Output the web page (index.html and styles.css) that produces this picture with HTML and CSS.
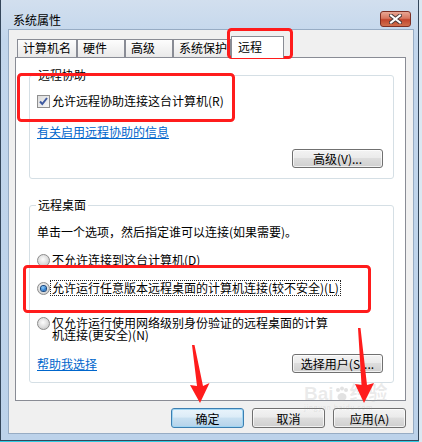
FILE: index.html
```html
<!DOCTYPE html>
<html lang="zh-CN">
<head>
    <meta charset="UTF-8">
    <meta name="viewport" content="width=device-width, initial-scale=1.0">
    <title>系统属性</title>
    <link rel="stylesheet" href="styles.css">
</head>
<body>
    <div class="window">
        <div class="titlebar">
            <span class="title">系统属性</span>
            <button class="close-btn" aria-label="关闭">
                <svg width="13" height="10" viewBox="0 0 13 10">
                    <path d="M2 1.5 L11 8.5 M11 1.5 L2 8.5" stroke="#4a3a3a" stroke-width="4" stroke-linecap="square"/>
                    <path d="M2 1.5 L11 8.5 M11 1.5 L2 8.5" stroke="#fff" stroke-width="2" stroke-linecap="square"/>
                </svg>
            </button>
        </div>

        <div class="client">
            <div class="tabs">
                <div class="tab tab-name">计算机名</div>
                <div class="tab tab-hw">硬件</div>
                <div class="tab tab-adv">高级</div>
                <div class="tab tab-protect">系统保护</div>
                <div class="tab tab-remote active">远程</div>
            </div>

            <div class="panel">
                <fieldset class="group">
                    <legend>远程协助</legend>
                    <label class="check-row">
                        <span class="checkbox">
                            <svg width="13" height="13" viewBox="0 0 13 13">
                                <path d="M3 6.5 L5.3 9 L10 3" fill="none" stroke="#3f5aa0" stroke-width="2"/>
                            </svg>
                        </span>
                        允许远程协助连接这台计算机(R)
                    </label>
                    <a class="link link-info" href="#">有关启用远程协助的信息</a>
                    <div class="btn-row">
                        <button class="btn btn-wide">高级(V)...</button>
                    </div>
                </fieldset>

                <fieldset class="group group-desktop">
                    <legend>远程桌面</legend>
                    <p class="hint">单击一个选项，然后指定谁可以连接(如果需要)。</p>
                    <label class="radio-row first">
                        <span class="radio"></span>
                        <span>不允许连接到这台计算机(D)</span>
                    </label>
                    <label class="radio-row">
                        <span class="radio checked"></span>
                        <span class="focused">允许运行任意版本远程桌面的计算机连接(较不安全)(L)</span>
                    </label>
                    <label class="radio-row multi">
                        <span class="radio"></span>
                        <span class="wrap-text">仅允许运行使用网络级别身份验证的远程桌面的计算机连接(更安全)(N)</span>
                    </label>
                    <div class="help-row">
                        <a class="link" href="#">帮助我选择</a>
                        <button class="btn btn-wide">选择用户(S)...</button>
                    </div>
                </fieldset>
            </div>

            <div class="dialog-buttons">
                <button class="btn btn-dialog default">确定</button>
                <button class="btn btn-dialog">取消</button>
                <button class="btn btn-dialog">应用(A)</button>
            </div>
        </div>
    </div>

    <div class="watermark">
        <span class="wm-logo">
            Bai
            <svg class="wm-paw" width="14" height="16" viewBox="0 0 14 16">
                <circle cx="3" cy="4" r="2"/>
                <circle cx="7" cy="2.5" r="2"/>
                <circle cx="11" cy="4" r="2"/>
                <ellipse cx="7" cy="11" rx="4.5" ry="4"/>
            </svg>
            经验
        </span>
        <span class="wm-url">jingyan.baidu.com</span>
    </div>

    <svg class="annotations" width="422" height="442" viewBox="0 0 422 442">
        <g fill="none" stroke="#ff1c1c" stroke-width="3">
            <rect x="228.5" y="29.5" width="63" height="28" rx="3"/>
            <rect x="18.5" y="74.5" width="215" height="46" rx="3"/>
            <rect x="24.5" y="266.5" width="345" height="45" rx="3"/>
        </g>
        <g fill="#ff1c1c">
            <polygon points="192,345 194.5,345 203,386 209.5,383 200,403 190,385 197,386"/>
            <polygon points="358,328 360.5,328 367,385 374,383 364,403 355,384 361.5,385"/>
        </g>
    </svg>
</body>
</html>
```

FILE: styles.css
```css
* {
    box-sizing: border-box;
}

body {
    margin: 0;
    width: 422px;
    height: 442px;
    position: relative;
    overflow: hidden;
    background: #dbe8f2;
    font-family: "Noto Sans CJK SC", "Liberation Sans", sans-serif;
    font-size: 12px;
    color: #000;
}

.window {
    width: 419px;
    height: 441px;
    display: flex;
    flex-direction: column;
    border: 1px solid #34465a;
    border-top: 0;
    background: linear-gradient(#d2dfee, #c2d6ec 40px, #bcd2ea);
    box-shadow: 0 1px 0 #31cbe2;
}

.titlebar {
    height: 29px;
    display: flex;
    align-items: flex-start;
    padding: 11px 7px 0 12px;
}

.title {
    margin-top: 2px;
    line-height: 14px;
}

.close-btn {
    margin-left: auto;
    width: 31px;
    height: 16px;
    padding: 0;
    display: flex;
    align-items: center;
    justify-content: center;
    border: 1px solid #7d2f24;
    border-radius: 3px;
    background: linear-gradient(#e8a795, #d7765f 45%, #c2452c 55%, #d0704e);
}

.client {
    flex: 1;
    margin: 0 4px 6px 7px;
    padding: 6px 7px 0 6px;
    background: #f0f0f0;
    border: 1px solid #97acc4;
}

/* tabs */
.tabs {
    height: 21px;
    display: flex;
    align-items: flex-end;
    padding-left: 2px;
}

.tab {
    height: 18px;
    padding-left: 5px;
    line-height: 16px;
    border: 1px solid #898c95;
    border-bottom: 0;
    background: linear-gradient(#fdfdfd, #e9e9e9);
    white-space: nowrap;
}

.tab-name { width: 60px; }
.tab-hw { width: 48px; }
.tab-adv { width: 48px; }
.tab-protect { width: 58px; }

.tab.active {
    width: 53px;
    height: 22px;
    margin-bottom: -1px;
    padding-top: 1px;
    padding-left: 6px;
    line-height: 18px;
    background: #fff;
    position: relative;
    z-index: 1;
}

.panel {
    height: 344px;
    padding: 10px 11px 0 13px;
    background: #fff;
    border: 1px solid #898c95;
}

/* group boxes */
.group {
    margin: 0;
    min-width: 0;
    padding: 0 10px 10px 7px;
    border: 1px solid #d5dfe5;
    border-radius: 3px;
}

.group legend {
    margin-left: -1px;
    padding: 0 2px;
    line-height: 14px;
}

.group-desktop {
    margin-top: 19px;
    padding-bottom: 9px;
}

.check-row {
    display: flex;
    align-items: center;
    gap: 2px;
    margin-top: 12px;
    line-height: 14px;
}

.checkbox {
    width: 13px;
    height: 13px;
    border: 1px solid #8f8f8f;
    background: linear-gradient(135deg, #dcdcdc, #f6f6f6);
    display: flex;
}

.checkbox svg {
    margin: -1px;
}

.link {
    display: block;
    width: fit-content;
    color: #0066cc;
    text-decoration: underline;
    line-height: 14px;
}

.link-info {
    margin-top: 17px;
}

.btn-row {
    display: flex;
    justify-content: flex-end;
    margin-top: 10px;
}

.btn {
    height: 19px;
    padding: 0;
    font-family: inherit;
    font-size: 12px;
    line-height: 16px;
    color: #000;
    border: 1px solid #707070;
    border-radius: 3px;
    background: linear-gradient(#f3f3f3, #ebebeb 45%, #dddddd 50%, #cfcfcf);
    box-shadow: inset 0 0 0 1px rgba(255, 255, 255, 0.7);
}

.btn-wide {
    width: 91px;
}

.hint {
    margin: 13px 0 0;
    line-height: 14px;
}

.radio-row {
    display: flex;
    align-items: center;
    gap: 2px;
    margin-top: 14px;
    line-height: 14px;
}

.radio {
    width: 13px;
    height: 13px;
    flex: none;
    border-radius: 50%;
    border: 1px solid #8c8c8c;
    background: radial-gradient(circle at 45% 40%, #fdfdfd, #e2e2e2 45%, #bdbdbd);
    display: flex;
    align-items: center;
    justify-content: center;
}

.radio.checked::after {
    content: "";
    width: 5px;
    height: 5px;
    border-radius: 50%;
    background: radial-gradient(circle at 40% 35%, #8fd0ff, #1f6fc4 70%);
    box-shadow: 0 0 0 1px #17457c;
}

.focused {
    outline: 1px dotted #222;
    padding: 0 1px;
    margin-left: -1px;
}

.radio-row.multi {
    align-items: flex-start;
    margin-top: 22px;
    line-height: 12px;
}

.wrap-text {
    width: 280px;
}

.help-row {
    display: flex;
    align-items: center;
    justify-content: space-between;
    margin-top: 13px;
}

.dialog-buttons {
    display: flex;
    justify-content: flex-end;
    gap: 8px;
    margin-top: 7px;
}

.btn-dialog {
    width: 73px;
    height: 20px;
    line-height: 17px;
}

.btn-dialog.default {
    border-color: #3c7fb1;
    background: linear-gradient(#e9f4fb, #dcecf7 45%, #c8e0f1 50%, #b5d3ea);
    box-shadow: inset 0 0 0 1px #9fd5f3;
}

/* overlays */
.annotations {
    position: absolute;
    top: 0;
    left: 0;
    pointer-events: none;
}

.watermark {
    position: absolute;
    left: 304px;
    top: 384px;
    display: flex;
    flex-direction: column;
    color: rgba(160, 160, 160, 0.22);
    pointer-events: none;
}

.wm-logo {
    display: flex;
    align-items: center;
    gap: 1px;
    font-family: "Liberation Sans", "Noto Sans CJK SC", sans-serif;
    font-size: 19px;
    font-weight: bold;
    line-height: 20px;
}

.wm-paw {
    fill: rgba(160, 160, 160, 0.3);
}

.wm-url {
    font-size: 7px;
    line-height: 8px;
    margin-top: -1px;
    letter-spacing: 0.5px;
}
```
